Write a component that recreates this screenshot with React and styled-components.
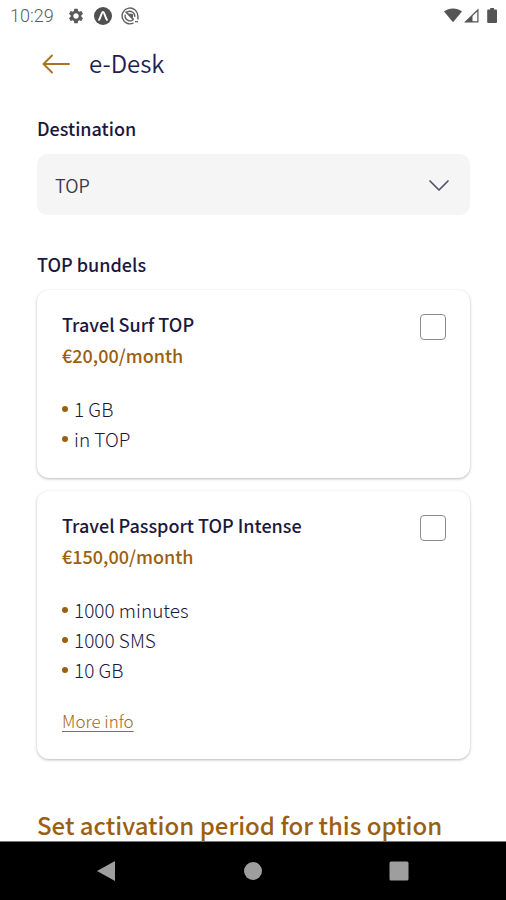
import React, { useState } from 'react';
import styled, { createGlobalStyle } from 'styled-components';
import { MdSettings } from 'react-icons/md';

const GlobalStyle = createGlobalStyle`
    * {
        box-sizing: border-box;
    }

    body {
        margin: 0;
        background: white;
        color: #1B1740;
        font-family: 'Noto Sans CJK SC', 'Noto Sans', sans-serif;
    }
`;

const Screen = styled.div`
    display: flex;
    flex-direction: column;
    height: 100vh;
    background: white;
`;

const StatusBar = styled.div`
    display: flex;
    justify-content: space-between;
    align-items: center;
    flex-shrink: 0;
    height: 31px;
    padding: 0 8px 0 10px;
    color: #5C5C5C;
`;

const StatusGroup = styled.div`
    display: flex;
    align-items: center;
    gap: ${props => props.gap};
`;

const Time = styled.span`
    margin-right: 4px;
    font-family: Roboto, sans-serif;
    font-size: 18px;
    font-weight: 300;
`;

const Header = styled.header`
    display: flex;
    align-items: center;
    flex-shrink: 0;
    gap: 18px;
    height: 65px;
    padding: 0 41px;
`;

const BackButton = styled.button`
    display: flex;
    padding: 0;
    border: none;
    background: none;
    cursor: pointer;
`;

const Title = styled.h1`
    margin: 0;
    padding-bottom: 2px;
    color: #211D55;
    font-size: 24px;
    font-weight: 350;
    line-height: 32px;
`;

const Content = styled.main`
    flex: 1;
    min-height: 0;
    overflow-y: auto;
    scrollbar-width: none;
    padding: 16px 36px 0 37px;
`;

const Label = styled.label`
    display: block;
    font-size: 18px;
    font-weight: 500;
    line-height: 32px;
`;

const SectionTitle = styled.h2`
    margin: 33px 0 10px;
    font-size: 18px;
    font-weight: 500;
    line-height: 32px;
`;

const SelectBox = styled.div`
    display: grid;
    align-items: center;
    margin-top: 10px;

    > * {
        grid-area: 1 / 1;
    }

    svg {
        justify-self: end;
        margin-right: 20px;
        pointer-events: none;
    }
`;

const Select = styled.select`
    appearance: none;
    width: 100%;
    height: 61px;
    padding: 0 18px;
    border: none;
    border-radius: 10px;
    background: #F5F5F5;
    color: #3B3852;
    font-family: inherit;
    font-size: 18px;
    font-weight: 350;
`;

const CardList = styled.div`
    display: grid;
    gap: 13px;
`;

const Card = styled.article`
    padding: 19px 24px 24px 25px;
    border-radius: 12px;
    background: white;
    box-shadow: 0 1px 3px rgba(0, 0, 0, 0.28);
`;

const CardTop = styled.div`
    display: flex;
    justify-content: space-between;
    align-items: flex-start;
`;

const BundleName = styled.label`
    display: block;
    font-size: 18px;
    font-weight: 500;
    line-height: 31px;
`;

const Price = styled.div`
    color: #9C5F10;
    font-size: 18px;
    font-weight: 500;
    line-height: 31px;
`;

const Checkbox = styled.input`
    appearance: none;
    width: 26px;
    height: 26px;
    margin: 5px 0 0;
    border: 1px solid #8C8C8C;
    border-radius: 4px;
    background: white;
    cursor: pointer;

    &:checked {
        background: #9C5F10;
    }
`;

const Features = styled.ul`
    margin: 23px 0 0;
    padding: 0;
    list-style: none;
`;

const Feature = styled.li`
    display: flex;
    align-items: center;
    gap: 6px;
    font-size: 19px;
    font-weight: 300;
    line-height: 30px;

    &::before {
        content: '';
        width: 6px;
        height: 6px;
        border-radius: 50%;
        background: #9C5F10;
    }
`;

const MoreInfo = styled.a`
    display: block;
    width: fit-content;
    margin-top: 22px;
    color: #A26A22;
    font-size: 17px;
    font-weight: 300;
    line-height: 28px;
    text-underline-offset: 3px;
    text-decoration-thickness: 1px;
`;

const PeriodTitle = styled.h2`
    margin: 51px 0 0;
    color: #9C5F10;
    font-size: 24px;
    font-weight: 500;
    line-height: 30px;
    white-space: nowrap;
`;

const NavBar = styled.nav`
    display: grid;
    grid-template-columns: repeat(3, 146px);
    justify-content: center;
    flex-shrink: 0;
    height: 59px;
    border-top: 1px solid #777777;
    background: black;
`;

const NavButton = styled.button`
    display: flex;
    justify-content: center;
    align-items: center;
    padding: 0;
    border: none;
    background: none;
    cursor: pointer;
`;

const bundles = [
    { id: 'surf', name: 'Travel Surf TOP', price: '€20,00/month', features: ['1 GB', 'in TOP'] },
    {
        id: 'passport',
        name: 'Travel Passport TOP Intense',
        price: '€150,00/month',
        features: ['1000 minutes', '1000 SMS', '10 GB'],
        info: true
    }
];

const ExpoIcon = () => (
    <svg width="18" height="18" viewBox="0 0 18 18">
        <circle cx="9" cy="9" r="9" fill="#505050" />
        <path d="M5 12.8 C7 10.4 7.4 5 9 5 C10.6 5 11 10.4 13 12.8" fill="none" stroke="white" strokeWidth="1.9" strokeLinecap="round" />
    </svg>
);

const SyncIcon = () => (
    <svg width="18" height="18" viewBox="0 0 18 18" fill="none" stroke="#606060">
        <path d="M12.6 16 A7.9 7.9 0 1 1 16.9 9 V12.6 M14 14.6 H17" strokeWidth="1.4" />
        <path d="M12.4 12.4 A4.9 4.9 0 0 1 4.3 7.6 M6 5.2 A4.9 4.9 0 0 1 13.7 9.8" strokeWidth="1.4" />
        <path d="M4.6 4.6 L12.6 12.6" strokeWidth="1.5" />
        <path d="M8 7 L11.6 7.4 L11.4 10.4 Z" fill="#606060" strokeWidth="1" />
    </svg>
);

const StatusIcons = () => (
    <svg width="54" height="18" viewBox="0 0 54 18" fill="#555555">
        <path d="M0 4.6 C5 0.4 13 0.4 18 4.6 L9 15.2 Z" />
        <path d="M20 15.5 L34.5 1.5 V15.5 Z M28.5 9 V14.3 H33.3 V4.4 Z" fillRule="evenodd" />
        <path d="M46.2 1 H50 V2.5 H52 Q53 2.5 53 3.5 V15 Q53 16 52 16 H44.2 Q43.2 16 43.2 15 V3.5 Q43.2 2.5 44.2 2.5 H46.2 Z" />
    </svg>
);

const Bundle = ({ bundle, checked, onToggle }) => (
    <Card>
        <CardTop>
            <div>
                <BundleName htmlFor={bundle.id}>{bundle.name}</BundleName>
                <Price>{bundle.price}</Price>
            </div>
            <Checkbox type='checkbox' id={bundle.id} checked={checked} onChange={onToggle} />
        </CardTop>
        <Features>
            {bundle.features.map((feature) => <Feature key={feature}>{feature}</Feature>)}
        </Features>
        {bundle.info && <MoreInfo href='#info'>More info</MoreInfo>}
    </Card>
);

const App = () => {
    const [selected, setSelected] = useState([]);

    const toggle = (id) => {
        setSelected(selected.includes(id) ? selected.filter((s) => s !== id) : [...selected, id]);
    };

    return (
        <Screen>
            <GlobalStyle />
            <StatusBar>
                <StatusGroup gap='9px'>
                    <Time>10:29</Time>
                    <MdSettings size={18} />
                    <ExpoIcon />
                    <SyncIcon />
                </StatusGroup>
                <StatusIcons />
            </StatusBar>
            <Header>
                <BackButton aria-label='Back'>
                    <svg width="30" height="22" viewBox="0 0 30 22" fill="none" stroke="#A8741F" strokeWidth="1.9" strokeLinecap="round" strokeLinejoin="round">
                        <path d="M28 11 H2.5 M11 2.5 L2.5 11 L11 19.5" />
                    </svg>
                </BackButton>
                <Title>e-Desk</Title>
            </Header>
            <Content>
                <Label htmlFor='destination'>Destination</Label>
                <SelectBox>
                    <Select id='destination'>
                        <option>TOP</option>
                    </Select>
                    <svg width="22" height="14" viewBox="0 0 22 14" fill="none" stroke="#55526B" strokeWidth="1.7" strokeLinecap="round" strokeLinejoin="round">
                        <path d="M2 3 L11 12 L20 3" />
                    </svg>
                </SelectBox>
                <SectionTitle>TOP bundels</SectionTitle>
                <CardList>
                    {bundles.map((bundle) => (
                        <Bundle
                            key={bundle.id}
                            bundle={bundle}
                            checked={selected.includes(bundle.id)}
                            onToggle={() => toggle(bundle.id)}
                        />
                    ))}
                </CardList>
                <PeriodTitle>Set activation period for this option</PeriodTitle>
            </Content>
            <NavBar>
                <NavButton aria-label='Back'>
                    <svg width="20" height="22" viewBox="0 0 20 22"><path d="M0 11 L18 1 V21 Z" fill="#9E9E9E" /></svg>
                </NavButton>
                <NavButton aria-label='Home'>
                    <svg width="20" height="20" viewBox="0 0 20 20"><circle cx="10" cy="10" r="9" fill="#9E9E9E" /></svg>
                </NavButton>
                <NavButton aria-label='Recent apps'>
                    <svg width="20" height="20" viewBox="0 0 20 20"><rect width="19" height="19" x="0.5" y="0.5" rx="1.5" fill="#9E9E9E" /></svg>
                </NavButton>
            </NavBar>
        </Screen>
    );
};

export default App;
